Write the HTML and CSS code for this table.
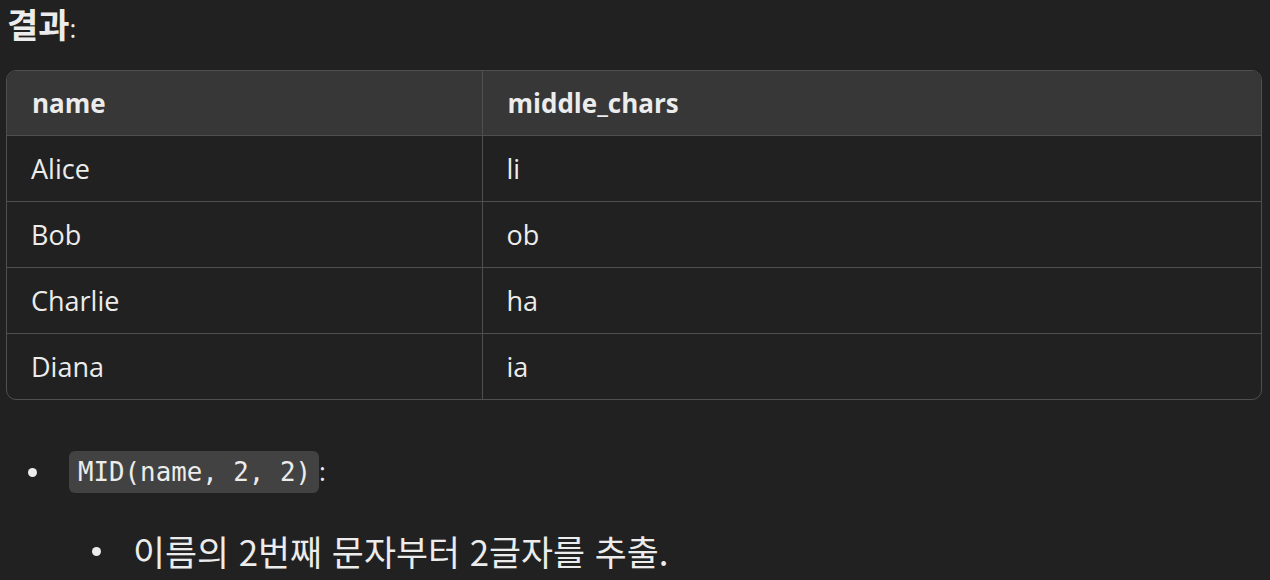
FILE: index.html
```html
<!DOCTYPE html>
<html lang="ko">
<head>
<meta charset="utf-8">
<link rel="stylesheet" href="styles.css">
</head>
<body>
<p class="heading"><strong class="ko">결과</strong>:</p>
<div class="table-wrap">
<table class="result">
<thead>
<tr><th class="col-name">name</th><th>middle_chars</th></tr>
</thead>
<tbody>
<tr><td>Alice</td><td>li</td></tr>
<tr><td>Bob</td><td>ob</td></tr>
<tr><td>Charlie</td><td>ha</td></tr>
<tr><td>Diana</td><td>ia</td></tr>
</tbody>
</table>
</div>
<ul class="list">
<li class="item"><span class="bullet"></span><span class="content"><code class="code">MID(name, 2, 2)</code>:</span>
</li>
</ul>
<ul class="list sub">
<li class="item"><span class="bullet"></span><span class="content ko-text">이름의 2번째 문자부터 2글자를 추출.</span></li>
</ul>
</body>
</html>
```
FILE: styles.css
```css
html, body {
  margin: 0;
  padding: 0;
  background: #212121;
}
body {
  color: #ececec;
  font-family: "Open Sans", "Noto Sans CJK KR", sans-serif;
  font-size: 26px;
  padding: 0 8px 0 6px;
}
.heading {
  margin: 0 0 20px 1px;
  height: 50px;
  line-height: 48px;
  font-weight: 400;
  font-size: 26px;
}
.heading .ko {
  font-family: "Noto Sans CJK KR", sans-serif;
  font-weight: 700;
  font-size: 34px;
}
.table-wrap {
  border: 1px solid #4f4f4f;
  border-radius: 10px;
  overflow: hidden;
}
.result {
  width: 100%;
  border-collapse: collapse;
  border-spacing: 0;
}
.result th, .result td {
  height: 66px;
  padding: 0 24px;
  text-align: left;
  border-bottom: 1px solid #4f4f4f;
  box-sizing: border-box;
}
.result td {
  font-size: 27px;
}
.result tr > *:first-child {
  border-right: 1px solid #4f4f4f;
  width: 475px;
}
.result tbody tr:last-child td {
  border-bottom: none;
}
.result th {
  background: #373737;
  font-weight: 700;
  padding-left: 25px;
  height: 64px;
}
.list {
  list-style: none;
  margin: 48px 0 0 0;
  padding: 0 0 0 22px;
}
.list.sub {
  margin-top: 31px;
  padding-left: 86px;
}
.item {
  display: flex;
  align-items: center;
  height: 48px;
}
.bullet {
  width: 9px;
  height: 9px;
  border-radius: 50%;
  background: #ececec;
  flex: none;
  margin-right: 32px;
}
.code {
  font-family: "DejaVu Sans Mono", monospace;
  font-size: 25.8px;
  background: #424242;
  border-radius: 6px;
  padding: 5px 8px 5px 9px;
  line-height: 32px;
  display: inline-block;
}
.ko-text {
  font-family: "Noto Sans CJK KR", sans-serif;
  font-size: 34.8px;
}
```
